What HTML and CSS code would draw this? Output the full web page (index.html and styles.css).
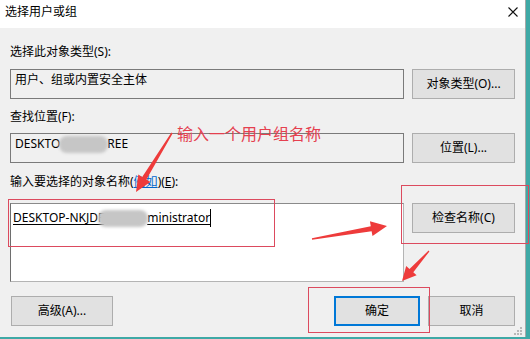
FILE: index.html
```html
<!DOCTYPE html>
<html lang="zh-CN">
<head>
<meta charset="utf-8">
<title>选择用户或组</title>
<link rel="stylesheet" href="styles.css">
</head>
<body>
<div class="stage">
  <div class="window">
    <div class="titlebar">
      <span class="title">选择用户或组</span>
      <svg class="close" width="10" height="10" viewBox="0 0 10 10"><path d="M0.5 0.5L9.5 9.5M9.5 0.5L0.5 9.5" stroke="#111" stroke-width="1.1" fill="none"/></svg>
    </div>
    <div class="content">
      <div class="label l1">选择此对象类型(S):</div>
      <div class="row r1">
        <div class="textbox">用户、组或内置安全主体</div>
        <div class="btn">对象类型(O)...</div>
      </div>
      <div class="label l2">查找位置(F):</div>
      <div class="row r2">
        <div class="textbox">DESKTO<span class="blur b1"></span>REE</div>
        <div class="btn">位置(L)...</div>
      </div>
      <div class="label l3">输入要选择的对象名称(<span class="link">例如</span>)(<u>E</u>):</div>
      <div class="row r3">
        <div class="textarea"><span class="name">DESKTOP-NKJDF<span class="blur b2"></span>ministrator</span><span class="caret"></span></div>
        <div class="btn">检查名称(C)</div>
      </div>
      <div class="bottom">
        <div class="btn adv">高级(A)...</div>
        <div class="spacer"></div>
        <div class="btn ok">确定</div>
        <div class="btn cancel">取消</div>
      </div>
    </div>
    <svg class="grip" width="8" height="8" viewBox="0 0 8 8">
      <rect x="6" y="0" width="2" height="2" fill="#b8b8b8"/>
      <rect x="3" y="3" width="2" height="2" fill="#b8b8b8"/>
      <rect x="6" y="3" width="2" height="2" fill="#b8b8b8"/>
      <rect x="0" y="6" width="2" height="2" fill="#b8b8b8"/>
      <rect x="3" y="6" width="2" height="2" fill="#b8b8b8"/>
      <rect x="6" y="6" width="2" height="2" fill="#b8b8b8"/>
    </svg>
  </div>

  <div class="note">输入一个用户组名称</div>
  <div class="mark m1"></div>
  <div class="mark m2"></div>
  <div class="mark m3"></div>
  <svg class="arrows" width="530" height="339" viewBox="0 0 530 339">
    <polygon points="172.6,133.4 146.4,179.6 150.3,182.0 136,192 138.3,174.6 142.2,177.0 171.4,132.6" fill="#ee3b3b"/>
    <polygon points="312.1,239.7 371.6,231.2 372.5,236.1 387,226 369.9,221.3 370.8,226.2 311.9,238.3" fill="#ee3b3b"/>
    <polygon points="429.4,251.4 413.3,272.3 416.6,275.3 402,281 406.2,265.9 409.5,268.9 428.6,250.6" fill="#ee3b3b"/>
  </svg>
</div>
</body>
</html>
```

FILE: styles.css
```css
* { box-sizing: border-box; }
html, body { margin: 0; padding: 0; }
body {
  background: #3fa9a6;
  font-family: "Noto Sans", "Noto Sans CJK SC", sans-serif;
  font-size: 12px;
  color: #000;
}
.stage {
  position: relative;
  width: 530px;
  height: 339px;
  overflow: hidden;
}
.window {
  position: relative;
  width: 526px;
  height: 337px;
  background: #f0f0f0;
  border-right: 1px solid #a8a8a8;
  display: flex;
  flex-direction: column;
}
.titlebar {
  height: 28px;
  background: #fff;
  display: flex;
  align-items: center;
  justify-content: space-between;
  padding: 0 7px 4px 5px;
  line-height: 16px;
}
.content {
  padding: 0 10px 0 10px;
}
.label {
  height: 16px;
  line-height: 16px;
  white-space: nowrap;
}
.l1 { margin-top: 16px; }
.l2 { margin-top: 10px; }
.l3 { margin-top: 11px; }
.row {
  display: grid;
  grid-template-columns: 394px 103px;
  gap: 8px;
  align-items: start;
}
.r1 { margin-top: 9px; }
.r2 { margin-top: 8px; }
.r3 { margin-top: 13px; }
.textbox {
  height: 30px;
  border: 1px solid #7a7a7a;
  padding: 2px 4px;
  line-height: 16px;
  white-space: nowrap;
}
.textarea {
  height: 79px;
  background: #fff;
  border: 1px solid #b4b4b4;
  border-left-color: #6e6e6e;
  border-top-color: #8a8a8a;
  padding: 6px 2px;
  line-height: 16px;
  white-space: nowrap;
  display: flex;
  align-items: flex-start;
}
.name {
  text-decoration: underline;
  text-underline-offset: 2px;
}
.caret {
  display: inline-block;
  width: 1px;
  height: 18px;
  margin-top: -1px;
  background: #000;
}
.blur {
  display: inline-block;
  height: 17px;
  vertical-align: top;
  background: #c6c6c6;
  border-radius: 8px;
  filter: blur(1.5px);
}
.b1 { width: 49px; margin: 0 -1px 0 -1px; }
.b2 { width: 50px; margin-left: -6px; margin-right: -1px; }
.link {
  color: #0066cc;
  text-decoration: underline;
}
.btn {
  height: 30px;
  background: #e1e1e1;
  border: 1px solid #adadad;
  display: flex;
  align-items: center;
  justify-content: center;
  line-height: 16px;
  white-space: nowrap;
}
.bottom {
  margin-top: 14px;
  display: flex;
  gap: 8px;
}
.adv { width: 102px; margin-left: 1px; }
.spacer { flex: 1; }
.ok { width: 86px; border: 2px solid #0078d7; }
.cancel { width: 87px; }
.grip {
  position: absolute;
  right: 3px;
  bottom: 2px;
}
.note {
  position: absolute;
  left: 177px;
  top: 124px;
  font-size: 16px;
  line-height: 20px;
  color: #e5404f;
  white-space: nowrap;
}
.mark {
  position: absolute;
  border: 1px solid #dc4a5e;
}
.m1 { left: 8px; top: 199px; width: 267px; height: 48px; }
.m2 { left: 401px; top: 185px; width: 128px; height: 59px; }
.m3 { left: 308px; top: 287px; width: 122px; height: 46px; }
.arrows {
  position: absolute;
  left: 0;
  top: 0;
}
```
